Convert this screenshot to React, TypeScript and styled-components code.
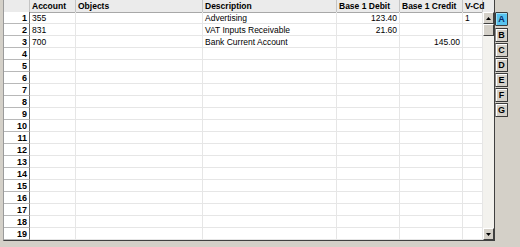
import React from "react";
import styled, { createGlobalStyle } from "styled-components";

const Global = createGlobalStyle`
  html, body { margin: 0; padding: 0; background: #d4d0c8; }
  body { font-family: "Liberation Sans", Arial, sans-serif; }
`;

const Screen = styled.div`
  width: 520px;
  height: 247px;
  background: #d4d0c8;
  display: flex;
  align-items: flex-start;
  padding-left: 3px;
  box-sizing: border-box;
  overflow: hidden;
`;

const Frame = styled.div`
  display: flex;
  flex-direction: column;
  border-left: 1px solid #9a9a9a;
  border-right: 1px solid #404040;
  border-bottom: 1px solid #404040;
  background: #ffffff;
`;

const COLS = "26px 46px 127px 134px 63px 63px 20px";

const HeaderRow = styled.div`
  display: grid;
  grid-template-columns: ${COLS} 11px;
  height: 12px;
  background: #ebebeb;
`;

const HeadCell = styled.div<{ $last?: boolean }>`
  box-sizing: border-box;
  border-right: 1px solid ${(p) => (p.$last ? "transparent" : "#c4c4c4")};
  border-bottom: 1px solid #a8a8a8;
  font-size: 8.5px;
  font-weight: bold;
  line-height: 12px;
  padding-left: 2px;
  color: #000;
  white-space: nowrap;
`;

const Body = styled.div`
  display: flex;
`;

const Rows = styled.div`
  display: grid;
  grid-template-columns: ${COLS};
  grid-auto-rows: 12px;
`;

const RowNum = styled.div`
  box-sizing: border-box;
  background: #ffffff;
  border-right: 1px solid #6e6e6e;
  border-bottom: 1px solid #b8b8b8;
  font-size: 9px;
  font-weight: bold;
  line-height: 12px;
  text-align: right;
  padding-right: 2px;
  color: #000;
`;

const Cell = styled.div<{ $right?: boolean }>`
  box-sizing: border-box;
  border-right: 1px solid #e6e6e6;
  border-bottom: 1px solid #e6e6e6;
  font-size: 8.5px;
  line-height: 12px;
  color: #000;
  text-align: ${(p) => (p.$right ? "right" : "left")};
  padding: ${(p) => (p.$right ? "0 2px 0 0" : "0 0 0 2px")};
  white-space: nowrap;
  overflow: hidden;
`;

const ScrollBar = styled.div`
  width: 11px;
  display: flex;
  flex-direction: column;
  background: #f1efea;
`;

const ScrollButton = styled.div`
  box-sizing: border-box;
  height: 12px;
  background: #d4d0c8;
  border-top: 1px solid #ffffff;
  border-left: 1px solid #ffffff;
  border-right: 1px solid #404040;
  border-bottom: 1px solid #404040;
  display: flex;
  align-items: center;
  justify-content: center;
`;

const Thumb = styled(ScrollButton)``;

const Track = styled.div`
  flex: 1;
  background: #f3f2ee;
`;

const Tabs = styled.div`
  display: flex;
  flex-direction: column;
  gap: 1px;
  padding-top: 12px;
`;

const Tab = styled.div<{ $active?: boolean }>`
  box-sizing: border-box;
  width: 13px;
  height: 14px;
  margin-bottom: ${(p) => (p.$active ? "1px" : "0")};
  background: ${(p) => (p.$active ? "#58c3ef" : "#d4d0c8")};
  border: 1px solid #3a3a3a;
  border-left-color: ${(p) => (p.$active ? "#3a3a3a" : "#8a8a8a")};
  box-shadow: inset 1px 1px 0 ${(p) => (p.$active ? "#9fe0fa" : "#ffffff")};
  border-radius: 1px;
  font-size: 9px;
  font-weight: bold;
  line-height: 12px;
  text-align: center;
  color: ${(p) => (p.$active ? "#0a2a6a" : "#000")};
`;

const Arrow = ({ down }: { down?: boolean }) => (
  <svg width="5" height="3" viewBox="0 0 5 3">
    <path d={down ? "M0 0 H5 L2.5 3 Z" : "M0 3 H5 L2.5 0 Z"} fill="#000" />
  </svg>
);

type Row = { acc: string; obj: string; desc: string; debit: string; credit: string; vcd: string };

const data: Row[] = [
  { acc: "355", obj: "", desc: "Advertising", debit: "123.40", credit: "", vcd: "1" },
  { acc: "831", obj: "", desc: "VAT Inputs Receivable", debit: "21.60", credit: "", vcd: "" },
  { acc: "700", obj: "", desc: "Bank Current Account", debit: "", credit: "145.00", vcd: "" },
];

const headers = ["", "Account", "Objects", "Description", "Base 1 Debit", "Base 1 Credit", "V-Cd"];

export default function App() {
  const rows = Array.from({ length: 19 }, (_, i) => data[i] ?? { acc: "", obj: "", desc: "", debit: "", credit: "", vcd: "" });
  return (
    <>
      <Global />
      <Screen>
        <Frame>
          <HeaderRow>
            {headers.map((h, i) => (
              <HeadCell key={i}>{h}</HeadCell>
            ))}
            <HeadCell $last />
          </HeaderRow>
          <Body>
            <Rows>
              {rows.map((r, i) => (
                <React.Fragment key={i}>
                  <RowNum>{i + 1}</RowNum>
                  <Cell>{r.acc}</Cell>
                  <Cell>{r.obj}</Cell>
                  <Cell>{r.desc}</Cell>
                  <Cell $right>{r.debit}</Cell>
                  <Cell $right>{r.credit}</Cell>
                  <Cell>{r.vcd}</Cell>
                </React.Fragment>
              ))}
            </Rows>
            <ScrollBar>
              <ScrollButton>
                <Arrow />
              </ScrollButton>
              <Thumb />
              <Track />
              <ScrollButton>
                <Arrow down />
              </ScrollButton>
            </ScrollBar>
          </Body>
        </Frame>
        <Tabs>
          {["A", "B", "C", "D", "E", "F", "G"].map((t, i) => (
            <Tab key={t} $active={i === 0}>
              {t}
            </Tab>
          ))}
        </Tabs>
      </Screen>
    </>
  );
}
